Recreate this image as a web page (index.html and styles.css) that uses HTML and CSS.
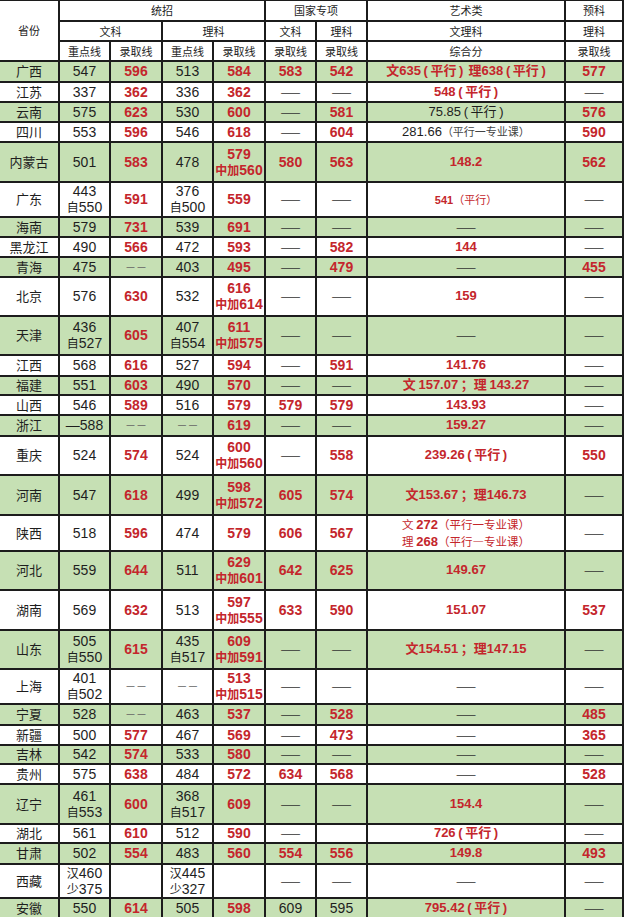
FILE: index.html
```html
<!DOCTYPE html>
<html lang="zh-CN">
<head>
<meta charset="utf-8">
<title>录取分数线</title>
<link rel="stylesheet" href="styles.css">
</head>
<body>
<table class="t">
<colgroup>
<col class="c-prov"><col class="c-a"><col class="c-b"><col class="c-a"><col class="c-b"><col class="c-a"><col class="c-a"><col class="c-art"><col class="c-pre">
</colgroup>
<thead>
<tr class="h20 top">
<th rowspan="3" class="hp">省份</th>
<th colspan="4">统招</th>
<th colspan="2">国家专项</th>
<th>艺术类</th>
<th>预科</th>
</tr>
<tr class="h20">
<th colspan="2">文科</th><th colspan="2">理科</th><th>文科</th><th>理科</th><th>文理科</th><th>理科</th>
</tr>
<tr class="h20">
<th>重点线</th><th>录取线</th><th>重点线</th><th>录取线</th><th>录取线</th><th>录取线</th><th>综合分</th><th>录取线</th>
</tr>
</thead>
<tbody>
<tr class="g h21"><td class="p">广西</td><td class="n">547</td><td class="r">596</td><td class="n">513</td><td class="r">584</td><td class="r">583</td><td class="r">542</td><td class="r a">文635 ( 平行 ) &nbsp;理638 ( 平行 )</td><td class="r">577</td></tr>
<tr class="h20"><td class="p">江苏</td><td class="n">337</td><td class="r">362</td><td class="n">336</td><td class="r">362</td><td class="d">——</td><td class="d">——</td><td class="r a">548 ( 平行 )</td><td class="d">——</td></tr>
<tr class="g h20"><td class="p">云南</td><td class="n">575</td><td class="r">623</td><td class="n">530</td><td class="r">600</td><td class="d">——</td><td class="r">581</td><td class="n a">75.85 ( 平行 )</td><td class="r">576</td></tr>
<tr class="h20"><td class="p">四川</td><td class="n">553</td><td class="r">596</td><td class="n">546</td><td class="r">618</td><td class="d">——</td><td class="r">604</td><td class="n a">281.66<span class="lt">（平行一专业课）</span></td><td class="r">590</td></tr>
<tr class="g h40"><td class="p">内蒙古</td><td class="n">501</td><td class="r">583</td><td class="n">478</td><td class="r">579<br><span class="zj">中加</span>560</td><td class="r">580</td><td class="r">563</td><td class="r a">148.2</td><td class="r">562</td></tr>
<tr class="h35"><td class="p">广东</td><td class="n">443<br><span class="zi">自</span>550</td><td class="r">591</td><td class="n">376<br><span class="zi">自</span>500</td><td class="r">559</td><td class="d">——</td><td class="d">——</td><td class="sm"><b>541</b>（平行）</td><td class="d">——</td></tr>
<tr class="g h20"><td class="p">海南</td><td class="n">579</td><td class="r">731</td><td class="n">539</td><td class="r">691</td><td class="d">——</td><td class="d">——</td><td class="d">——</td><td class="d">——</td></tr>
<tr class="h20"><td class="p">黑龙江</td><td class="n">490</td><td class="r">566</td><td class="n">472</td><td class="r">593</td><td class="d">——</td><td class="r">582</td><td class="r a">144</td><td class="d">——</td></tr>
<tr class="g h20"><td class="p">青海</td><td class="n">475</td><td class="x">－－</td><td class="n">403</td><td class="r">495</td><td class="d">——</td><td class="r">479</td><td class="d">——</td><td class="r">455</td></tr>
<tr class="h39"><td class="p">北京</td><td class="n">576</td><td class="r">630</td><td class="n">532</td><td class="r">616<br><span class="zj">中加</span>614</td><td class="d">——</td><td class="d">——</td><td class="r a">159</td><td class="d">——</td></tr>
<tr class="g h39"><td class="p">天津</td><td class="n">436<br><span class="zi">自</span>527</td><td class="r">605</td><td class="n">407<br><span class="zi">自</span>554</td><td class="r">611<br><span class="zj">中加</span>575</td><td class="d">——</td><td class="d">——</td><td class="d">——</td><td class="d">——</td></tr>
<tr class="h21"><td class="p">江西</td><td class="n">568</td><td class="r">616</td><td class="n">527</td><td class="r">594</td><td class="d">——</td><td class="r">591</td><td class="r a">141.76</td><td class="d">——</td></tr>
<tr class="g h19"><td class="p">福建</td><td class="n">551</td><td class="r">603</td><td class="n">490</td><td class="r">570</td><td class="d">——</td><td class="d">——</td><td class="r a">文 157.07 ；理 143.27</td><td class="d">——</td></tr>
<tr class="h20"><td class="p">山西</td><td class="n">546</td><td class="r">589</td><td class="n">516</td><td class="r">579</td><td class="r">579</td><td class="r">579</td><td class="r a">143.93</td><td class="d">——</td></tr>
<tr class="g h21"><td class="p">浙江</td><td class="n">—588</td><td class="x">－－</td><td class="x">－－</td><td class="r">619</td><td class="d">——</td><td class="d">——</td><td class="r a">159.27</td><td class="d">——</td></tr>
<tr class="h39"><td class="p">重庆</td><td class="n">524</td><td class="r">574</td><td class="n">524</td><td class="r">600<br><span class="zj">中加</span>560</td><td class="d">——</td><td class="r">558</td><td class="r a">239.26 ( 平行 )</td><td class="r">550</td></tr>
<tr class="g h40"><td class="p">河南</td><td class="n">547</td><td class="r">618</td><td class="n">499</td><td class="r">598<br><span class="zj">中加</span>572</td><td class="r">605</td><td class="r">574</td><td class="r a">文153.67 ；理146.73</td><td class="d">——</td></tr>
<tr class="h33"><td class="p">陕西</td><td class="n">518</td><td class="r">596</td><td class="n">474</td><td class="r">579</td><td class="r">606</td><td class="r">567</td><td class="two">文 <b>272</b>（平行一专业课）<br>理 <b>268</b>（平行—专业课）</td><td class="d">——</td></tr>
<tr class="g h39"><td class="p">河北</td><td class="n">559</td><td class="r">644</td><td class="n">511</td><td class="r">629<br><span class="zj">中加</span>601</td><td class="r">642</td><td class="r">625</td><td class="r a">149.67</td><td class="d">——</td></tr>
<tr class="h40"><td class="p">湖南</td><td class="n">569</td><td class="r">632</td><td class="n">513</td><td class="r">597<br><span class="zj">中加</span>555</td><td class="r">633</td><td class="r">590</td><td class="r a">151.07</td><td class="r">537</td></tr>
<tr class="g h39"><td class="p">山东</td><td class="n">505<br><span class="zi">自</span>550</td><td class="r">615</td><td class="n">435<br><span class="zi">自</span>517</td><td class="r">609<br><span class="zj">中加</span>591</td><td class="d">——</td><td class="d">——</td><td class="r a">文154.51 ；理147.15</td><td class="d">——</td></tr>
<tr class="h35"><td class="p">上海</td><td class="n">401<br><span class="zi">自</span>502</td><td class="x">－－</td><td class="x">－－</td><td class="r">513<br><span class="zj">中加</span>515</td><td class="d">——</td><td class="d">——</td><td class="d">——</td><td class="d">——</td></tr>
<tr class="g h21"><td class="p">宁夏</td><td class="n">528</td><td class="x">－－</td><td class="n">463</td><td class="r">537</td><td class="d">——</td><td class="r">528</td><td class="d">——</td><td class="r">485</td></tr>
<tr class="h20"><td class="p">新疆</td><td class="n">500</td><td class="r">577</td><td class="n">467</td><td class="r">569</td><td class="d">——</td><td class="r">473</td><td class="d">——</td><td class="r">365</td></tr>
<tr class="g h19"><td class="p">吉林</td><td class="n">542</td><td class="r">574</td><td class="n">533</td><td class="r">580</td><td class="d">——</td><td class="d">——</td><td class="d">——</td><td class="d">——</td></tr>
<tr class="h20"><td class="p">贵州</td><td class="n">575</td><td class="r">638</td><td class="n">484</td><td class="r">572</td><td class="r">634</td><td class="r">568</td><td class="d">——</td><td class="r">528</td></tr>
<tr class="g h40"><td class="p">辽宁</td><td class="n">461<br><span class="zi">自</span>553</td><td class="r">600</td><td class="n">368<br><span class="zi">自</span>517</td><td class="r">609</td><td class="d">——</td><td class="d">——</td><td class="r a">154.4</td><td class="d">——</td></tr>
<tr class="h19"><td class="p">湖北</td><td class="n">561</td><td class="r">610</td><td class="n">512</td><td class="r">590</td><td class="d">——</td><td class="n"></td><td class="r a">726 ( 平行 )</td><td class="d">——</td></tr>
<tr class="g h21"><td class="p">甘肃</td><td class="n">502</td><td class="r">554</td><td class="n">483</td><td class="r">560</td><td class="r">554</td><td class="r">556</td><td class="r a">149.8</td><td class="r">493</td></tr>
<tr class="h34"><td class="p">西藏</td><td class="n"><span class="zi">汉</span>460<br><span class="zi">少</span>375</td><td class="n"></td><td class="n"><span class="zi">汉</span>445<br><span class="zi">少</span>327</td><td class="n"></td><td class="d">——</td><td class="d">——</td><td class="d">——</td><td class="d">——</td></tr>
<tr class="g h20"><td class="p">安徽</td><td class="n">550</td><td class="r">614</td><td class="n">505</td><td class="r">598</td><td class="n">609</td><td class="n">595</td><td class="r a">795.42 ( 平行 )</td><td class="d">——</td></tr>
</tbody>
</table>
</body>
</html>
```
FILE: styles.css
```css
html, body {
  margin: 0;
  padding: 0;
  background: #ffffff;
}

.t {
  border-collapse: collapse;
  table-layout: fixed;
  width: 623px;
  font-family: "Liberation Sans", "Noto Sans CJK SC", sans-serif;
  color: #1e1e1e;
}

.c-prov { width: 59px; }
.c-a { width: 51px; }
.c-b { width: 52px; }
.c-art { width: 198px; }
.c-pre { width: 58px; }

.t th,
.t td {
  border: 2px solid #1c1c1c;
  padding: 0;
  text-align: center;
  vertical-align: middle;
  line-height: 16px;
  overflow: hidden;
  white-space: nowrap;
}

.t tr > :first-child { border-left: none; }
.t tr.top > * { border-top-width: 1px; }

.t th {
  font-family: "Noto Sans CJK SC", sans-serif;
  font-weight: normal;
  font-size: 11px;
  background: #ffffff;
}

.h19 { height: 19px; }
.h20 { height: 20px; }
.h21 { height: 21px; }
.h33 { height: 33px; }
.h34 { height: 34px; }
.h35 { height: 35px; }
.h39 { height: 39px; }
.h40 { height: 40px; }

.g td { background: #c6e0b4; }

.p {
  font-family: "Noto Sans CJK SC", sans-serif;
  font-size: 13px;
}

.n {
  font-size: 14px;
}

.r {
  font-size: 14px;
  font-weight: bold;
  color: #c4262c;
}

.a {
  font-size: 13px;
  word-spacing: -1px;
}

.zj {
  font-family: "Noto Sans CJK SC", sans-serif;
  font-size: 12px;
}

.zi {
  font-family: "Noto Sans CJK SC", sans-serif;
  font-size: 12px;
}

.d {
  font-family: "Noto Sans CJK SC", sans-serif;
  font-size: 12px;
  color: #333;
}

.x {
  font-family: "Noto Sans CJK SC", sans-serif;
  font-size: 11px;
  color: #666;
}

.lt {
  font-family: "Noto Sans CJK SC", sans-serif;
  font-size: 11px;
  color: #444;
}

.sm {
  font-family: "Noto Sans CJK SC", sans-serif;
  font-size: 11px;
  color: #c4262c;
}

.sm b {
  font-family: "Liberation Sans", sans-serif;
  font-size: 11px;
}

.two {
  font-family: "Noto Sans CJK SC", sans-serif;
  font-size: 11.5px;
  line-height: 15px;
  color: #c4262c;
}

.two b {
  font-family: "Liberation Sans", sans-serif;
  font-size: 13px;
}
```
